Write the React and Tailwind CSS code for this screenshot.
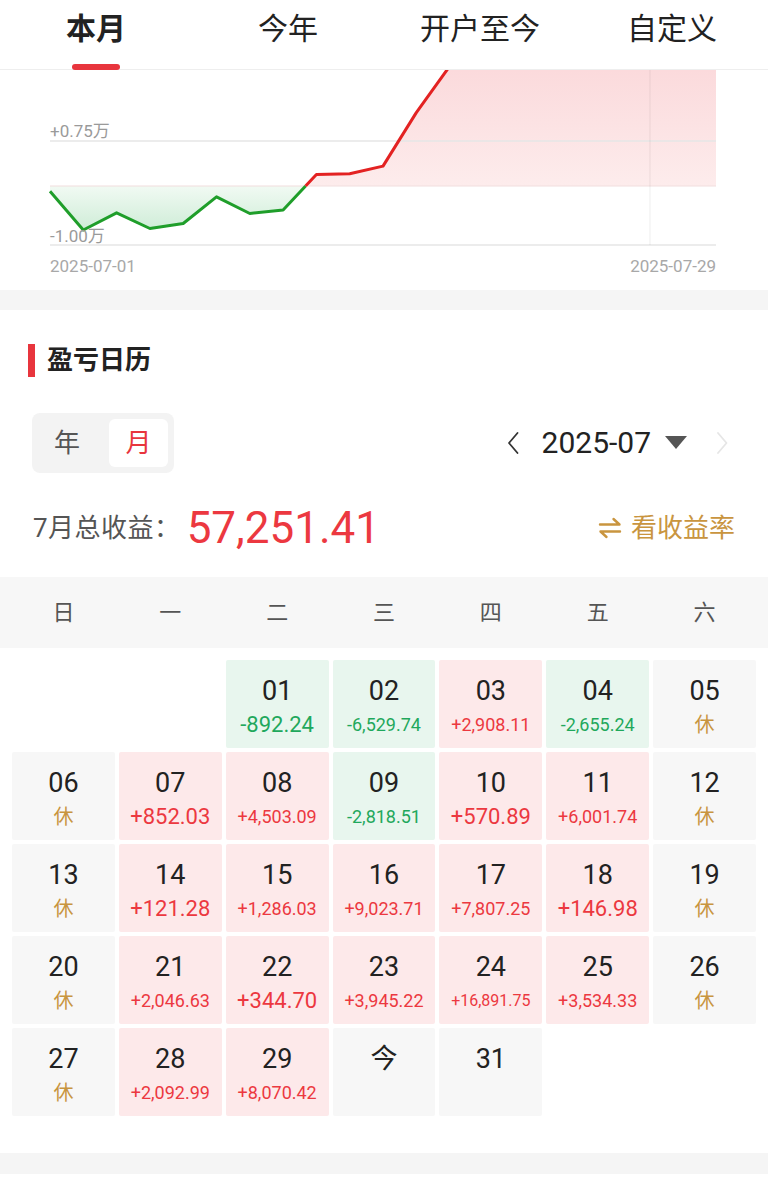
import React from "react";

const daily = [-892.24, -6529.74, 2908.11, -2655.24, 852.03, 4503.09, -2818.51, 570.89, 6001.74, 121.28, 1286.03, 9023.71, 7807.25, 146.98, 2046.63, 344.7, 3945.22, 16891.75, 3534.33, 2092.99, 8070.42];

function Chart() {
  let acc = 0;
  const pts = daily.map((d, i) => {
    acc += d;
    return [50 + i * 33.3, 186 - acc * 0.00593, acc];
  });
  const a = pts[7], b = pts[8];
  const t = (0 - a[2]) / (b[2] - a[2]);
  const xc = a[0] + t * (b[0] - a[0]);
  const green = [...pts.slice(0, 8).map((p) => [p[0], p[1]]), [xc, 186]];
  const red = [[xc, 186], ...pts.slice(8).map((p) => [p[0], p[1]])];
  const s = (arr) => arr.map((p) => `${p[0].toFixed(1)},${p[1].toFixed(1)}`).join(" ");
  const greenFill = [[50, 186], ...green];
  const redFill = [...red, [716, 186]];
  const ff = "Roboto, 'Noto Sans CJK SC', sans-serif";
  return (
    <svg width="768" height="220" viewBox="0 70 768 220" className="block">
      <defs>
        <linearGradient id="rf" x1="0" y1="70" x2="0" y2="186" gradientUnits="userSpaceOnUse">
          <stop offset="0" stopColor="#fbdadc" />
          <stop offset="1" stopColor="#fdecec" />
        </linearGradient>
        <linearGradient id="gf" x1="0" y1="186" x2="0" y2="232" gradientUnits="userSpaceOnUse">
          <stop offset="0" stopColor="#f1faf3" />
          <stop offset="1" stopColor="#cdecd6" />
        </linearGradient>
      </defs>
      <polygon points={s(redFill)} fill="url(#rf)" />
      <polygon points={s(greenFill)} fill="url(#gf)" />
      <line x1="50" y1="141" x2="716" y2="141" stroke="#e6e6e6" strokeWidth="1.5" />
      <line x1="50" y1="186" x2="716" y2="186" stroke="#f1dede" strokeWidth="1.2" />
      <line x1="50" y1="245" x2="716" y2="245" stroke="#e6e6e6" strokeWidth="1.5" />
      <line x1="650" y1="70" x2="650" y2="245" stroke="#000" strokeOpacity="0.06" strokeWidth="1.2" />
      <polyline points={s(green)} fill="none" stroke="#1f9e2a" strokeWidth="3" strokeLinejoin="round" />
      <polyline points={s(red)} fill="none" stroke="#e32222" strokeWidth="3" strokeLinejoin="round" />
      <text x="50" y="137" fontSize="17" fill="#9a9a9a" fontFamily={ff}>+0.75万</text>
      <text x="50" y="242" fontSize="17" fill="#9a9a9a" fontFamily={ff}>-1.00万</text>
      <text x="50" y="272" fontSize="17" fill="#a8a8a8" fontFamily={ff}>2025-07-01</text>
      <text x="716" y="272" fontSize="17" fill="#a8a8a8" fontFamily={ff} textAnchor="end">2025-07-29</text>
    </svg>
  );
}

const G = "g", R = "r", X = "x", P = "p", E = "e";
const weeks = [
  [[E], [E], [G, "01", "-892.24"], [G, "02", "-6,529.74"], [R, "03", "+2,908.11"], [G, "04", "-2,655.24"], [X, "05"]],
  [[X, "06"], [R, "07", "+852.03"], [R, "08", "+4,503.09"], [G, "09", "-2,818.51"], [R, "10", "+570.89"], [R, "11", "+6,001.74"], [X, "12"]],
  [[X, "13"], [R, "14", "+121.28"], [R, "15", "+1,286.03"], [R, "16", "+9,023.71"], [R, "17", "+7,807.25"], [R, "18", "+146.98"], [X, "19"]],
  [[X, "20"], [R, "21", "+2,046.63"], [R, "22", "+344.70"], [R, "23", "+3,945.22"], [R, "24", "+16,891.75"], [R, "25", "+3,534.33"], [X, "26"]],
  [[X, "27"], [R, "28", "+2,092.99"], [R, "29", "+8,070.42"], [P, "今"], [P, "31"], [E], [E]],
];

function sizeClass(v) {
  if (v.length <= 7) return "text-[22px]";
  if (v.length <= 9) return "text-[18px]";
  return "text-[16px]";
}

function Cell({ c }) {
  const [type, day, val] = c;
  if (type === E) return <div className="h-[88px]" />;
  const bg = type === G ? "bg-[#e8f6ee]" : type === R ? "bg-[#fde9ea]" : "bg-[#f7f7f7]";
  return (
    <div className={`h-[88px] ${bg} rounded-[2px] flex flex-col items-center pt-[15px]`}>
      <div className="text-[27px] leading-[32px] text-[#222]">{day}</div>
      {type === X && <div className="mt-[6px] text-[20px] leading-[24px] text-[#c8953f]">休</div>}
      {(type === G || type === R) && (
        <div className={`mt-[6px] leading-[24px] ${sizeClass(val)} ${type === G ? "text-[#1fa85c]" : "text-[#ec3840]"}`}>{val}</div>
      )}
    </div>
  );
}

export default function App() {
  const tabs = ["本月", "今年", "开户至今", "自定义"];
  return (
    <div className="w-[768px] h-[1184px] bg-white overflow-hidden font-['Roboto','Noto_Sans_CJK_SC',sans-serif]">
      <div className="h-[70px] border-b border-[#eeeeee] grid grid-cols-4">
        {tabs.map((t, i) => (
          <div key={t} className="flex flex-col items-center">
            <div className={`mt-[11px] text-[30px] leading-[36px] text-[#222] ${i === 0 ? "font-bold" : ""}`}>{t}</div>
            {i === 0 && <div className="mt-[17px] w-[48px] h-[6px] rounded-full bg-[#e8353d]" />}
          </div>
        ))}
      </div>
      <Chart />
      <div className="h-[20px] bg-[#f5f5f5]" />
      <div className="pt-[34px]">
        <div className="flex items-center h-[33px] pl-[28px]">
          <div className="w-[7px] h-[33px] bg-[#e8353d]" />
          <div className="ml-[12px] text-[26px] leading-[33px] font-bold text-[#222]">盈亏日历</div>
        </div>
        <div className="mt-[36px] h-[60px] flex items-center pl-[32px] pr-[40px]">
          <div className="w-[142px] h-[60px] rounded-lg bg-[#f3f3f3] flex items-center p-[6px]">
            <div className="ml-[16px] text-[26px] text-[#555]">年</div>
            <div className="ml-auto w-[59px] h-[48px] rounded-md bg-white flex items-center justify-center text-[26px] text-[#e8353d]">月</div>
          </div>
          <div className="ml-auto flex items-center">
            <svg width="12" height="22" viewBox="0 0 12 22">
              <path d="M10.5 1 L2 11 L10.5 21" fill="none" stroke="#333" strokeWidth="1.8" strokeLinecap="round" strokeLinejoin="round" />
            </svg>
            <div className="ml-[23px] text-[30px] leading-[34px] text-[#222]">2025-07</div>
            <svg className="ml-[14px]" width="22" height="14" viewBox="0 0 22 14">
              <polygon points="0,0 22,0 11,13" fill="#555" />
            </svg>
            <svg className="ml-[30px]" width="11" height="22" viewBox="0 0 11 22">
              <path d="M1 1 L9.5 11 L1 21" fill="none" stroke="#e6e6e6" strokeWidth="1.8" strokeLinecap="round" strokeLinejoin="round" />
            </svg>
          </div>
        </div>
        <div className="mt-[25px] h-[60px] flex items-center pl-[33px] pr-[33px]">
          <div className="text-[26px] tracking-[0.5px] text-[#555]">7月总收益：</div>
          <div className="ml-[6px] text-[44px] leading-[50px] text-[#ec3840]">57,251.41</div>
          <div className="ml-auto flex items-center text-[#c9953f]">
            <svg width="24" height="22" viewBox="0 0 24 22">
              <path d="M2 7.5 H21.5 L15.5 2" fill="none" stroke="#c9953f" strokeWidth="2.4" strokeLinecap="round" strokeLinejoin="round" />
              <path d="M22 14.5 H2.5 L8.5 20" fill="none" stroke="#c9953f" strokeWidth="2.4" strokeLinecap="round" strokeLinejoin="round" />
            </svg>
            <div className="ml-[9px] text-[26px] leading-[32px]">看收益率</div>
          </div>
        </div>
        <div className="mt-[19px] h-[71px] bg-[#f7f7f7] grid grid-cols-7 gap-1 px-3 items-center">
          {["日", "一", "二", "三", "四", "五", "六"].map((d) => (
            <div key={d} className="text-center text-[22px] text-[#555]">{d}</div>
          ))}
        </div>
        <div className="pt-3 px-3 flex flex-col gap-1">
          {weeks.map((w, wi) => (
            <div key={wi} className="grid grid-cols-7 gap-1">
              {w.map((c, ci) => (
                <Cell key={ci} c={c} />
              ))}
            </div>
          ))}
        </div>
        <div className="mt-[37px] h-[21px] bg-[#f5f5f5]" />
      </div>
    </div>
  );
}
